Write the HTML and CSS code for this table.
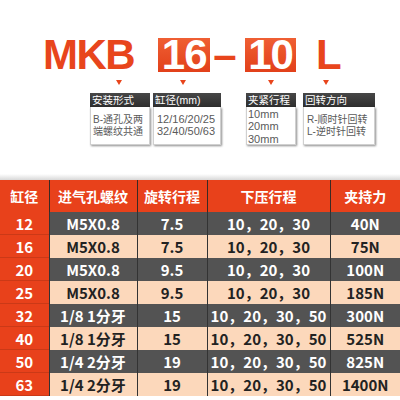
FILE: index.html
```html
<!DOCTYPE html>
<html lang="zh-CN">
<head>
    <meta charset="UTF-8">
    <meta name="viewport" content="width=device-width, initial-scale=1.0">
    <title>MKB 转角气缸 选型</title>
    <link rel="stylesheet" href="styles.css">
</head>
<body>

<!-- Model code -->
<div class="model">
    <span class="code code-series">MKB</span>
    <span class="code-box box-bore">16</span>
    <span class="code code-dash">–</span>
    <span class="code-box box-stroke">10</span>
    <span class="code code-dir">L</span>
</div>

<!-- Code explanation cards -->
<div class="specs">
    <div class="spec spec-mount">
        <i class="arrow"></i>
        <div class="spec-card">
            <div class="spec-head">安装形式</div>
            <div class="spec-body">
                <span>B-通孔及两</span>
                <span>端螺纹共通</span>
            </div>
        </div>
    </div>
    <div class="spec spec-bore">
        <i class="arrow"></i>
        <div class="spec-card">
            <div class="spec-head">缸径(mm)</div>
            <div class="spec-body">
                <span>12/16/20/25</span>
                <span>32/40/50/63</span>
            </div>
        </div>
    </div>
    <div class="spec spec-stroke">
        <i class="arrow"></i>
        <div class="spec-card">
            <div class="spec-head">夹紧行程</div>
            <div class="spec-body">
                <span>10mm</span>
                <span>20mm</span>
                <span>30mm</span>
            </div>
        </div>
    </div>
    <div class="spec spec-dir">
        <i class="arrow"></i>
        <div class="spec-card">
            <div class="spec-head">回转方向</div>
            <div class="spec-body">
                <span>R-顺时针回转</span>
                <span>L-逆时针回转</span>
            </div>
        </div>
    </div>
</div>

<div class="shade"></div>

<!-- Spec table -->
<table class="spec-table">
    <colgroup>
        <col class="c-bore">
        <col class="c-port">
        <col class="c-turn">
        <col class="c-press">
        <col class="c-force">
    </colgroup>
    <thead>
        <tr>
            <th>缸径</th>
            <th>进气孔螺纹</th>
            <th>旋转行程</th>
            <th>下压行程</th>
            <th>夹持力</th>
        </tr>
    </thead>
    <tbody>
        <tr class="dark"><td>12</td><td>M5X0.8</td><td>7.5</td><td>10，20，30</td><td>40N</td></tr>
        <tr class="light"><td>16</td><td>M5X0.8</td><td>7.5</td><td>10，20，30</td><td>75N</td></tr>
        <tr class="dark"><td>20</td><td>M5X0.8</td><td>9.5</td><td>10，20，30</td><td>100N</td></tr>
        <tr class="light"><td>25</td><td>M5X0.8</td><td>9.5</td><td>10，20，30</td><td>185N</td></tr>
        <tr class="dark"><td>32</td><td>1/8 1分牙</td><td>15</td><td>10，20，30，50</td><td>300N</td></tr>
        <tr class="light"><td>40</td><td>1/8 1分牙</td><td>15</td><td>10，20，30，50</td><td>525N</td></tr>
        <tr class="dark"><td>50</td><td>1/4 2分牙</td><td>19</td><td>10，20，30，50</td><td>825N</td></tr>
        <tr class="light"><td>63</td><td>1/4 2分牙</td><td>19</td><td>10，20，30，50</td><td>1400N</td></tr>
    </tbody>
</table>

</body>
</html>
```

FILE: styles.css
```css
body {
    margin: 0;
    width: 400px;
    height: 400px;
    overflow: hidden;
    background-color: #fff;
    font-family: "Liberation Sans", "Noto Sans CJK SC", sans-serif;
}

/* Model code */
.model {
    display: flex;
    align-items: flex-start;
    padding: 38px 0 0 43px;
    height: 34px;
}

.code {
    font-size: 42px;
    font-weight: bold;
    line-height: 34px;
    letter-spacing: -1.5px;
    color: #e8451c;
}

.code-box {
    width: 52px;
    height: 34px;
    line-height: 34px;
    text-align: center;
    font-size: 42px;
    font-weight: bold;
    letter-spacing: -1px;
    color: #fff;
    background: linear-gradient(#ef5f33, #e2401a);
}

.box-bore {
    margin-left: 24px;
}

.code-dash {
    margin-left: 3px;
}

.box-stroke {
    width: 51px;
    margin-left: 10px;
}

.code-dir {
    margin-left: 20px;
}

/* Explanation cards */
.specs {
    display: flex;
    align-items: flex-start;
    padding-left: 90px;
    margin-top: 8px;
}

.spec {
    display: flex;
    flex-direction: column;
}

.arrow {
    width: 0;
    height: 0;
    border-left: 3.5px solid transparent;
    border-right: 3.5px solid transparent;
    border-top: 5px solid #e8451c;
}

.spec-mount .arrow { margin-left: 26px; }
.spec-bore .arrow { margin-left: 27px; }
.spec-stroke .arrow { margin-left: 22px; }
.spec-dir .arrow { margin-left: 20px; }

.spec-card {
    margin-top: 8px;
}

.spec-mount .spec-card { width: 60px; }
.spec-bore { margin-left: 3px; }
.spec-bore .spec-card { width: 68px; }
.spec-stroke { margin-left: 25px; }
.spec-stroke .spec-card { width: 50px; }
.spec-dir { margin-left: 7px; }
.spec-dir .spec-card { width: 72px; }

.spec-head {
    height: 14px;
    line-height: 14px;
    padding-left: 2px;
    font-size: 10.5px;
    color: #fff;
    background: linear-gradient(#474747, #2e2e2e);
    white-space: nowrap;
}

.spec-body {
    height: 37px;
    display: flex;
    flex-direction: column;
    justify-content: center;
    padding-left: 2px;
    font-size: 10px;
    line-height: 11.5px;
    color: #5a5a5a;
    background-color: #fff;
    border: 1px solid #d0d0d0;
    border-top: none;
    box-shadow: 1px 1px 2px rgba(0, 0, 0, 0.45);
    white-space: nowrap;
}

.spec-bore .spec-body,
.spec-stroke .spec-body {
    font-size: 11px;
    padding-left: 3px;
}

.spec-stroke .spec-body {
    justify-content: flex-start;
    line-height: 12.3px;
    padding-top: 1px;
    height: 36px;
    padding-left: 1px;
}

.spec-dir .spec-body {
    padding-left: 3px;
}

.shade {
    height: 6px;
    margin-top: 29px;
    background: linear-gradient(rgba(220, 220, 220, 0), #d8d8d8);
}

/* Table */
.spec-table {
    width: 400px;
    border-collapse: collapse;
    table-layout: fixed;
    font-family: "Noto Sans CJK SC", sans-serif;
    font-weight: bold;
    text-align: center;
}

.c-bore { width: 49px; }
.c-port { width: 88px; }
.c-turn { width: 70px; }
.c-press { width: 123px; }
.c-force { width: 70px; }

.spec-table th {
    height: 32px;
    padding: 0;
    font-size: 14px;
    font-weight: bold;
    color: #fff;
    background-color: #e8411b;
    border-right: 1px solid #3a2a24;
}

.spec-table td {
    height: 23px;
    padding: 0;
    font-size: 15px;
    line-height: 23px;
    border-right: 1px solid #333;
    white-space: nowrap;
}

.spec-table th:last-child,
.spec-table td:last-child {
    border-right: none;
}

.spec-table td:first-child {
    color: #fff;
    background-color: #e8411b;
    box-shadow: inset 0 -1px 0 rgba(0, 0, 0, 0.12);
}

.dark td {
    color: #fff;
    background-color: #535353;
}

.light td {
    color: #222;
    background-color: #fcd8bb;
}
```
